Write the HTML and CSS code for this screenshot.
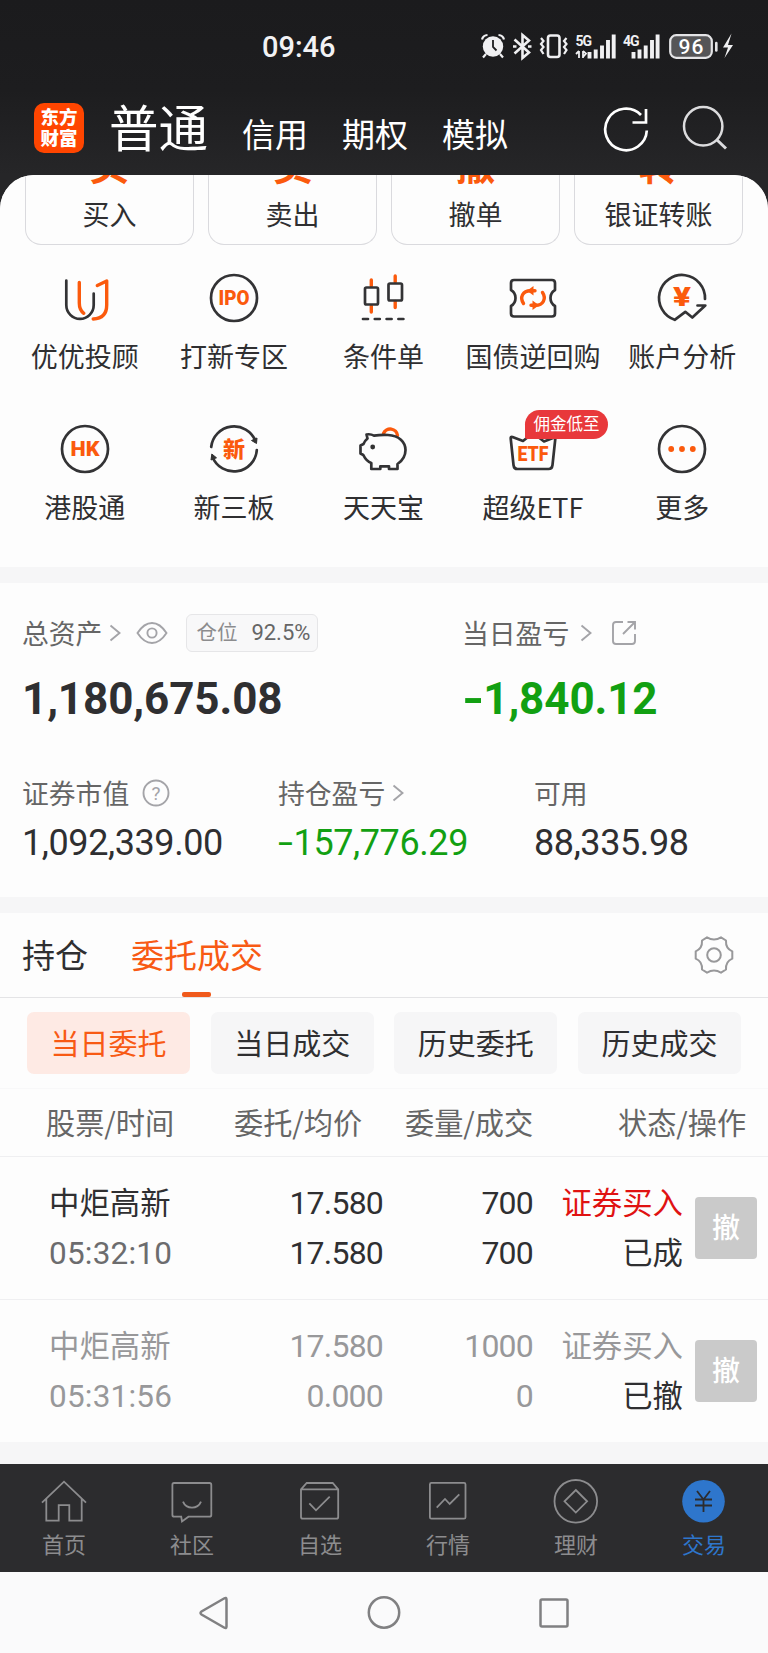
FILE: index.html
```html
<!DOCTYPE html>
<html lang="zh-CN">
<head>
  <meta charset="UTF-8">
  <meta name="viewport" content="width=device-width, initial-scale=1.0">
  <title>交易</title>
  <link rel="stylesheet" href="styles.css">
</head>
<body>
  <div class="status-bar">
    <span class="time">09:46</span>
    <svg class="status-icons" width="256" height="34" viewBox="480 29 256 34">
      <!-- alarm -->
      <circle cx="493" cy="46.5" r="10.2" fill="#f0f0f2"/>
      <path d="M482 39.5a6 6 0 0 1 5.5-4.5M504 39.5a6 6 0 0 0-5.5-4.5M486 54l-3 3.5M500 54l3 3.5" stroke="#f0f0f2" stroke-width="2.2" fill="none"/>
      <path d="M493 40v7l3.5 3.5" stroke="#1c1c1e" stroke-width="1.8" fill="none"/>
      <!-- bluetooth -->
      <path d="M514.5 39.5l14.500 13-6.500 5.500V35l6.500 5.500-14.500 13" stroke="#f0f0f2" stroke-width="2.6" fill="none"/>
      <path d="M513 46.5h3.500M528 46.5h3.500" stroke="#f0f0f2" stroke-width="2.6"/>
      <!-- vibrate -->
      <rect x="548" y="35.5" width="11.5" height="21.5" rx="2.5" stroke="#f0f0f2" stroke-width="2.6" fill="none"/>
      <path d="M541 38l2.500 3-2.500 3 2.500 3-2.500 3 2.500 4M566.5 38l-2.500 3 2.500 3-2.500 3 2.500 3-2.500 4" stroke="#f0f0f2" stroke-width="2.2" fill="none"/>
      <!-- signal -->
      <text class="net" x="575.5" y="45.5">5G</text>
      <path d="M579 51v7M576 54l3-3M583 51v7M583 57l3-3.500-3-2.500" stroke="#f0f0f2" stroke-width="1.8" fill="none"/>
      <path d="M589.5 52v6.500M595.7 49.500v9M602 45.500v13M608 40v18.500M613.7 34.500v24" stroke="#f0f0f2" stroke-width="3.9"/>
      <text class="net" x="623" y="45.5">4G</text>
      <path d="M633.5 52v6.500M639.5 49.500v9M645.7 45.500v13M652 40v18.500M657.6 34.500v24" stroke="#f0f0f2" stroke-width="3.9"/>
      <!-- battery -->
      <rect x="670.2" y="35.2" width="41.600" height="22.600" rx="6" fill="#555557" stroke="#e4e4e6" stroke-width="2.2"/>
      <text class="battery" x="691.5" y="53.6">96</text>
      <path d="M716.3 43v7.500" stroke="#e4e4e6" stroke-width="2.6" stroke-linecap="round"/>
      <path d="M731.5 33.500L723 47.500h5l-3.500 10.500 8.500-13h-5z" fill="#f0f0f2"/>
    </svg>
  </div>

  <header class="top">
    <div class="logo">东方<br>财富</div>
    <nav class="modes">
      <span class="mode active">普通</span>
      <span class="mode">信用</span>
      <span class="mode">期权</span>
      <span class="mode">模拟</span>
    </nav>
    <svg class="top-icon" width="50" height="50" viewBox="0 0 50 50">
      <path d="M45.800 27.500A20.800 20.800 0 1 1 40 12" stroke="#fff" stroke-width="2.700" fill="none"/>
      <path d="M45 6v13.500H31.500" stroke="#fff" stroke-width="2.700" fill="none"/>
    </svg>
    <svg class="top-icon search" width="50" height="50" viewBox="0 0 50 50">
      <circle cx="22.200" cy="23.300" r="19.200" stroke="#dcdcde" stroke-width="2.500" fill="none"/>
      <path d="M35.500 36.500l9.500 9" stroke="#dcdcde" stroke-width="3"/>
    </svg>
  </header>

  <main class="sheet">
    <section class="cards">
      <div class="card"><b>买</b><span>买入</span></div>
      <div class="card"><b>卖</b><span>卖出</span></div>
      <div class="card"><b>撤</b><span>撤单</span></div>
      <div class="card"><b>转</b><span>银证转账</span></div>
    </section>

    <section class="menu">
      <div class="item">
        <svg class="icon" viewBox="0 0 60 60">
          <path class="dark" d="M11.300 12.500V37a13.700 13.900 0 0 0 27.400 0V25.500"/>
          <path class="hot" d="M24.300 14.500V35q0 7 4.500 10.300M42.300 17.500l9.400-4.500V37q0 13.500-13.500 14"/>
        </svg>
        <span>优优投顾</span>
      </div>
      <div class="item">
        <svg class="icon" viewBox="0 0 60 60">
          <circle class="dark" cx="30" cy="30" r="23"/>
          <text class="mark" x="30" y="37.400" textLength="31" lengthAdjust="spacingAndGlyphs">IPO</text>
        </svg>
        <span>打新专区</span>
      </div>
      <div class="item">
        <svg class="icon" viewBox="0 0 60 60">
          <path class="hot" d="M18.300 12v6M18.300 38v6M42.200 8v6M42.200 33.500v6"/>
          <rect class="dark" x="12" y="19.500" width="13" height="17" rx="1.500"/>
          <rect class="dark" x="35.500" y="15.500" width="13.500" height="17" rx="1.500"/>
          <path class="dark" d="M10 51h5M21.800 51h5M33.600 51h5M45.400 51h5"/>
        </svg>
        <span>条件单</span>
      </div>
      <div class="item">
        <svg class="icon" viewBox="0 0 60 60">
          <path class="dark" d="M11 12H49q3 0 3 3v7q-4.500 2.500-4.500 8t4.500 8v7.500q0 3-3 3H11q-3 0-3-3V38q4.500-2.500 4.500-8T8 22v-7q0-3 3-3z"/>
          <path class="hot" d="M20.500 35.500C16.500 29.500 19.500 22.500 28 22.700h4M39.500 24.500C43.500 30.500 40.500 37.500 32 37.300h-4"/>
          <path d="M24 22.700l6.500-4.800v9.600zM36 37.300l-6.500-4.800v9.600z" fill="#fb5a0d"/>
        </svg>
        <span>国债逆回购</span>
      </div>
      <div class="item">
        <svg class="icon" viewBox="0 0 60 60">
          <path class="dark" d="M53 31A23 23 0 1 0 22.700 51.800L33.300 43.800 40.300 49.500 53.300 37.500H45.500"/>
          <text class="mark yen" x="30" y="37.500" textLength="18" lengthAdjust="spacingAndGlyphs">¥</text>
        </svg>
        <span>账户分析</span>
      </div>
      <div class="item">
        <svg class="icon" viewBox="0 0 60 60">
          <circle class="dark" cx="30" cy="30" r="23"/>
          <text class="mark" x="30" y="37.400" textLength="29" lengthAdjust="spacingAndGlyphs">HK</text>
        </svg>
        <span>港股通</span>
      </div>
      <div class="item">
        <svg class="icon" viewBox="0 0 60 60">
          <path class="dark" d="M7.200 28A23 23 0 0 1 51.500 22M52.800 31A23 23 0 0 1 8.500 38"/>
          <path d="M53 19l-.5 5.500-5-3zM7 41l.8-6 4.700 3.800z" fill="#333" stroke="#333" stroke-linejoin="round"/>
          <text class="mark cn" x="30" y="38">新</text>
        </svg>
        <span>新三板</span>
      </div>
      <div class="item">
        <svg class="icon" viewBox="0 0 60 60">
          <path class="hot" d="M30.500 14.500a7.300 7.300 0 0 1 14 2"/>
          <path class="dark" d="M13.500 15.500q4-.8 7.500 1.200c5-.8 9-1 14-.7C46 16.500 52.500 23 52.500 31c0 7-3.500 11-8 14v5h-8.500v-2.700h-8.700V50h-9v-6c-4.500-1.500-6.300-4.500-8-8L7.500 34.500V26.500l3-1.500q1.500-3.500 4-5.500z"/>
          <circle cx="19.700" cy="28" r="2.400" fill="#333"/>
        </svg>
        <span>天天宝</span>
      </div>
      <div class="item">
        <div class="icon-wrap">
          <svg class="icon" viewBox="0 0 60 60">
            <path class="dark" d="M20 22L9.500 18q-2-.5-1.800 1.500L10.500 46q.5 4 4 4H45.500q3.500 0 4-4L52.500 18 41 22.500 30 14z"/>
            <text class="mark" x="30" y="41.600" textLength="31" lengthAdjust="spacingAndGlyphs">ETF</text>
          </svg>
          <em class="badge">佣金低至</em>
        </div>
        <span>超级ETF</span>
      </div>
      <div class="item">
        <svg class="icon" viewBox="0 0 60 60">
          <circle class="dark" cx="30" cy="30" r="23"/>
          <g fill="#fb5a0d">
            <circle cx="19.200" cy="30" r="2.900"/>
            <circle cx="30" cy="30" r="2.900"/>
            <circle cx="40.800" cy="30" r="2.900"/>
          </g>
        </svg>
        <span>更多</span>
      </div>
    </section>

    <section class="assets">
      <div class="totals">
        <div class="total">
          <div class="label">总资产
            <svg class="arrow" viewBox="0 0 12 18"><path d="M1.500 1.500L10.500 9l-9 7.500"/></svg>
            <svg class="eye" viewBox="0 0 32 24"><path d="M1.500 12Q8 2 16 2t14.500 10Q24 22 16 22T1.500 12z"/><circle cx="16" cy="12" r="4.600"/></svg>
            <span class="chip">仓位<i>92.5%</i></span>
          </div>
          <div class="big">1,180,675.08</div>
        </div>
        <div class="total">
          <div class="label">当日盈亏
            <svg class="arrow far" viewBox="0 0 12 18"><path d="M1.500 1.500L10.500 9l-9 7.500"/></svg>
            <svg class="share" viewBox="0 0 26 26"><path d="M12 2H5Q2 2 2 5V21q0 3 3 3H21q3 0 3-3V14M12 14L23.500 2.500M16.500 2H24V9.500"/></svg>
          </div>
          <div class="big green"><span class="minus">-</span>1,840.12</div>
        </div>
      </div>
      <div class="parts">
        <div class="part">
          <div class="label">证券市值
            <svg class="help" viewBox="0 0 28 28"><circle cx="14" cy="14" r="12.500"/><text x="14" y="20.500">?</text></svg>
          </div>
          <div class="num">1,092,339.00</div>
        </div>
        <div class="part">
          <div class="label">持仓盈亏
            <svg class="arrow" viewBox="0 0 12 18"><path d="M1.500 1.500L10.500 9l-9 7.500"/></svg>
          </div>
          <div class="num green"><span class="minus">-</span>157,776.29</div>
        </div>
        <div class="part">
          <div class="label">可用</div>
          <div class="num">88,335.98</div>
        </div>
      </div>
    </section>

    <section class="orders">
      <div class="tabs">
        <span class="tab">持仓</span>
        <span class="tab current">委托成交</span>
        <svg class="gear" viewBox="0 0 40 40">
          <path d="M13 2.300Q20 6.500 27 2.300L32 5.500Q31.500 13.500 38.300 16.300V23.700Q31.500 26.500 32 34.500L27 37.700Q20 33.500 13 37.700L8 34.500Q8.500 26.500 1.700 23.700V16.300Q8.500 13.500 8 5.500z"/>
          <circle cx="20" cy="20" r="6.800"/>
        </svg>
      </div>
      <div class="pills">
        <span class="pill on">当日委托</span>
        <span class="pill">当日成交</span>
        <span class="pill">历史委托</span>
        <span class="pill">历史成交</span>
      </div>
      <div class="row head">
        <span>股票/时间</span><span>委托/均价</span><span>委量/成交</span><span>状态/操作</span>
      </div>
      <div class="row">
        <div class="name">中炬高新<small>05:32:10</small></div>
        <div class="val">17.580<br>17.580</div>
        <div class="val">700<br>700</div>
        <div class="state"><span class="buy">证券买入</span><br>已成</div>
        <button class="cancel">撤</button>
      </div>
      <div class="row gone">
        <div class="name">中炬高新<small>05:31:56</small></div>
        <div class="val">17.580<br>0.000</div>
        <div class="val">1000<br>0</div>
        <div class="state"><span class="buy">证券买入</span><br>已撤</div>
        <button class="cancel">撤</button>
      </div>
    </section>
  </main>

  <footer class="tabbar">
    <div class="tab-item">
      <svg viewBox="0 0 48 48"><path d="M2 25.700L24 4.700l22 21M6.300 22v21.700h12.400V28.200h10.600v15.500h12.400V22"/></svg>
      <span>首页</span>
    </div>
    <div class="tab-item">
      <svg viewBox="0 0 48 48"><path d="M6 6H41.500q1.800 0 1.800 1.800V38q0 1.700-1.800 1.700H20.500L14 44.500l-.8-4.800H6.200q-1.800 0-1.800-1.700V7.800Q4.400 6 6 6zM15 24.700q2.500 6 9 6t9-6"/></svg>
      <span>社区</span>
    </div>
    <div class="tab-item">
      <svg viewBox="0 0 48 48"><path d="M5 12.300L10.700 6h26l5.500 6.300V40q0 1.700-1.700 1.700H6.700Q5 41.700 5 40zM5 12.300H42.200M13.300 26.300l6.700 7 13.700-13.600"/></svg>
      <span>自选</span>
    </div>
    <div class="tab-item">
      <svg viewBox="0 0 48 48"><rect x="5.900" y="5.900" width="35.600" height="35.800" rx="1.500"/><path d="M12.700 30.700L21 22l4.700 5 9.600-9.700"/></svg>
      <span>行情</span>
    </div>
    <div class="tab-item">
      <svg viewBox="0 0 48 48"><circle cx="23.800" cy="24.300" r="21.300"/><path d="M23.800 13L35.100 24.300 23.800 35.600 12.500 24.300z"/></svg>
      <span>理财</span>
    </div>
    <div class="tab-item selected">
      <svg viewBox="0 0 48 48"><circle class="coin" cx="23.500" cy="24.300" r="21.300"/><path class="sign" d="M17 14l6.500 8.500L30 14M23.500 22.500V35M15 22.500H32M15 28.500H32"/></svg>
      <span>交易</span>
    </div>
  </footer>

  <div class="sysnav">
    <svg viewBox="0 0 40 40"><path d="M32.500 6.500V33.500Q32.500 36 30 34.500L7.500 21.500Q5.500 20 7.500 18.500L30 5.500q2.500-1.500 2.500 1z"/></svg>
    <svg viewBox="0 0 40 40"><circle cx="20" cy="19.500" r="15.200"/></svg>
    <svg viewBox="0 0 40 40"><rect x="6.500" y="6.500" width="27" height="27" rx="1.500"/></svg>
  </div>
</body>
</html>
```

FILE: styles.css
```css
* {
  box-sizing: border-box;
}

body {
  margin: 0;
  width: 768px;
  height: 1653px;
  overflow: hidden;
  background: linear-gradient(#1b1b1d, #1d1d1f 90px, #262628 175px, #262628);
  font-family: "Noto Sans CJK SC", sans-serif;
  color: #2f2f31;
  display: flex;
  flex-direction: column;
}

/* status bar */
.status-bar {
  height: 90px;
  padding: 0 32px 0 262px;
  display: flex;
  align-items: center;
  justify-content: space-between;
  flex: none;
}

.status-icons {
  position: relative;
  top: 1px;
}

.time {
  font: 500 29px/34px Roboto, sans-serif;
  color: #f2f2f4;
  padding-top: 4px;
}

.net {
  font: 700 14px Roboto, sans-serif;
  fill: #f0f0f2;
  letter-spacing: -1px;
}

.battery {
  font: 500 21px Roboto, sans-serif;
  fill: #fff;
  text-anchor: middle;
  letter-spacing: 1px;
}

/* header */
.top {
  height: 85px;
  flex: none;
  padding: 13px 37px 0 34px;
  display: flex;
}

.logo {
  width: 50px;
  height: 50px;
  border-radius: 10px;
  background: #ff4500;
  color: #fff;
  font-size: 18.5px;
  font-weight: 900;
  line-height: 20.5px;
  text-align: center;
  padding-top: 3px;
}

.modes {
  display: flex;
  align-items: baseline;
  margin: -2px 0 0 25px;
  height: 50px;
  color: #fff;
}

.mode {
  font-size: 33px;
  line-height: 50px;
  width: 100px;
}

.mode.active {
  font-size: 49.5px;
  width: 133px;
}

.top-icon {
  margin-left: auto;
}

.top-icon.search {
  margin-left: 30px;
}

/* sheet */
.sheet {
  height: 1289px;
  flex: none;
  background: #f6f6f7;
  border-radius: 34px 34px 0 0;
  overflow: hidden;
}

.cards {
  display: flex;
  gap: 14px;
  padding: 0 25px;
  height: 70px;
  background: #fdfdfd;
}

.card {
  flex: 1;
  display: flex;
  flex-direction: column;
  align-items: center;
  justify-content: flex-end;
  border: 1px solid #dadade;
  border-top: 0;
  border-radius: 0 0 16px 16px;
  font-size: 27px;
}

.card b {
  color: #fb5a0d;
  font-size: 40px;
  line-height: 40px;
  margin-bottom: 11px;
}

.card span {
  line-height: 40px;
  padding-bottom: 10px;
}

.menu {
  background: #fdfdfd;
  height: 322px;
  padding: 23px 11px 0 10px;
  display: grid;
  grid-template-columns: repeat(5, 1fr);
  grid-auto-rows: 151px;
}

.item {
  display: flex;
  flex-direction: column;
  align-items: center;
  font-size: 27px;
  line-height: 40px;
  white-space: nowrap;
}

.icon {
  display: block;
  width: 60px;
  height: 60px;
  margin-bottom: 8px;
}

.dark,
.hot {
  fill: none;
  stroke: #333335;
  stroke-width: 2.7;
  stroke-linecap: round;
  stroke-linejoin: round;
}

.hot {
  stroke: #fb5a0d;
  stroke-width: 3.4;
}

.mark {
  font: 900 21px Roboto, sans-serif;
  fill: #fb5a0d;
  text-anchor: middle;
}

.mark.yen {
  font-size: 25px;
}

.mark.cn {
  font: 900 22px "Noto Sans CJK SC", sans-serif;
}

.icon-wrap {
  position: relative;
}

.badge {
  position: absolute;
  left: 22px;
  top: -9px;
  width: 83px;
  height: 29px;
  border-radius: 14.5px 14.5px 14.5px 2px;
  background: #e8383b;
  color: #fff;
  font-size: 16.5px;
  font-style: normal;
  line-height: 27px;
  text-align: center;
}

/* assets */
.assets {
  margin-top: 16px;
  height: 314px;
  padding-left: 22px;
  background: #fdfdfd;
}

.totals {
  display: flex;
  padding-top: 31px;
}

.total {
  width: 440px;
}

.total:last-child {
  width: auto;
}

.label {
  display: flex;
  align-items: center;
  height: 38px;
  font-size: 26.8px;
  line-height: 38px;
  color: #666;
}

.label svg {
  fill: none;
  stroke: #a4a4a8;
  stroke-width: 1.9;
  flex: none;
}

.arrow {
  width: 12px;
  height: 18px;
  margin-left: 7px;
}

.arrow.far {
  margin-left: 11px;
}

.label .eye {
  width: 32px;
  height: 24px;
  margin-left: 15px;
}

.share {
  width: 26px;
  height: 26px;
  margin-left: 19px;
}

.help {
  width: 28px;
  height: 28px;
  margin-left: 13px;
}

.help text {
  font: 19px Roboto, sans-serif;
  fill: #a4a4a8;
  stroke: none;
  text-anchor: middle;
}

.chip {
  width: 132px;
  height: 38px;
  margin-left: 18px;
  padding: 0 7px 0 9px;
  display: flex;
  justify-content: space-between;
  border: 1px solid #e6e6e8;
  border-radius: 6px;
  background: #f8f8f9;
  color: #8c8c8e;
  font-size: 20.5px;
  line-height: 33px;
}

.chip i {
  font: 22px/35px Roboto, sans-serif;
  color: #666;
}

.big {
  font: 700 44px/52px Roboto, sans-serif;
  letter-spacing: -.1px;
  margin-top: 21px;
  white-space: nowrap;
}

.num {
  font: 400 36px/42px Roboto, sans-serif;
  letter-spacing: -.4px;
  margin-top: 10px;
  white-space: nowrap;
}

.green {
  color: #12a012;
}

/* the hyphen is narrower than the dash used for losses */
.minus {
  display: inline-block;
  transform: scaleX(1.3);
  transform-origin: left;
  margin-right: 4px;
}

.num .minus {
  transform: scaleX(1.5);
  margin-right: 6px;
}

.parts {
  display: flex;
  padding-top: 49px;
}

.part {
  width: 256px;
  flex: none;
}

/* orders */
.orders {
  margin-top: 16px;
  height: 529px;
  background: #fdfdfd;
}

.tabs {
  height: 85px;
  padding: 0 34px 0 22px;
  display: flex;
  align-items: center;
  border-bottom: 1px solid #e4e4e6;
}

.tab {
  position: relative;
  font-size: 33px;
  height: 84px;
  line-height: 82px;
  margin-right: 43px;
}

.tab.current {
  color: #f85a14;
}

.tab.current::after {
  content: "";
  position: absolute;
  left: 51px;
  bottom: 0;
  width: 29px;
  height: 5px;
  border-radius: 2px;
  background: #f05a1c;
}

.gear {
  width: 40px;
  height: 40px;
  margin-left: auto;
  fill: none;
  stroke: #98989a;
  stroke-width: 2;
  stroke-linejoin: round;
}

.pills {
  display: flex;
  gap: 20.6px;
  padding: 14px 27px;
  height: 91px;
  border-bottom: 1px solid #f8f8f9;
}

.pill {
  flex: 1;
  height: 62px;
  border-radius: 7px;
  background: #f6f6f7;
  font-size: 29px;
  line-height: 60px;
  text-align: center;
}

.pill.on {
  background: #feeae4;
  color: #f85a14;
}

.row {
  height: 143px;
  display: grid;
  grid-template-columns: 170px 164px 150px 150px 74px;
  padding-left: 49px;
  border-bottom: 1px solid #efeff1;
  font-size: 30.4px;
  line-height: 50px;
  padding-top: 19px;
}

.row:last-child {
  border-bottom: 0;
}

.row.head {
  height: 68px;
  padding: 7px 21px 0 46px;
  grid-template-columns: 188px 171px 213px auto;
  font-size: 29.2px;
  color: #666;
}

.name small {
  display: block;
  font: 31.5px/50px Roboto, sans-serif;
  letter-spacing: .2px;
  color: #6c6c6e;
  padding-top: 3px;
}

.val {
  font: 32px/50px Roboto, sans-serif;
  letter-spacing: -.8px;
  text-align: right;
  padding-top: 2px;
}

.state {
  text-align: right;
  font-size: 30.4px;
}

.buy {
  color: #e01212;
}

.cancel {
  width: 62px;
  height: 62px;
  margin: 21px 0 0 12px;
  padding: 0 0 4px;
  border: 0;
  border-radius: 4px;
  background: #cacaca;
  color: #fff;
  font: 500 28px "Noto Sans CJK SC", sans-serif;
}

.gone .name,
.gone small,
.gone .val,
.gone .buy {
  color: #98989a;
}

/* bottom bars */
.tabbar {
  height: 108px;
  flex: none;
  display: flex;
  background: #2c2c2e;
  color: #8c8c8e;
}

.tab-item {
  flex: 1;
  display: flex;
  flex-direction: column;
  align-items: center;
  padding-top: 13px;
  font-size: 22px;
  line-height: 36px;
}

.tab-item svg {
  width: 48px;
  height: 48px;
  fill: none;
  stroke: #8c8c8e;
  stroke-width: 1.8;
}

.tab-item.selected {
  color: #2e76cc;
}

.tab-item .coin {
  fill: #2e76cc;
  stroke: none;
}

.tab-item .sign {
  stroke: #2c2c2e;
}

.sysnav {
  flex: 1;
  display: flex;
  justify-content: center;
  gap: 130px;
  padding-top: 21px;
  background: #fafafb;
}

.sysnav svg {
  width: 40px;
  height: 40px;
  fill: none;
  stroke: #808082;
  stroke-width: 2.5;
}
```
